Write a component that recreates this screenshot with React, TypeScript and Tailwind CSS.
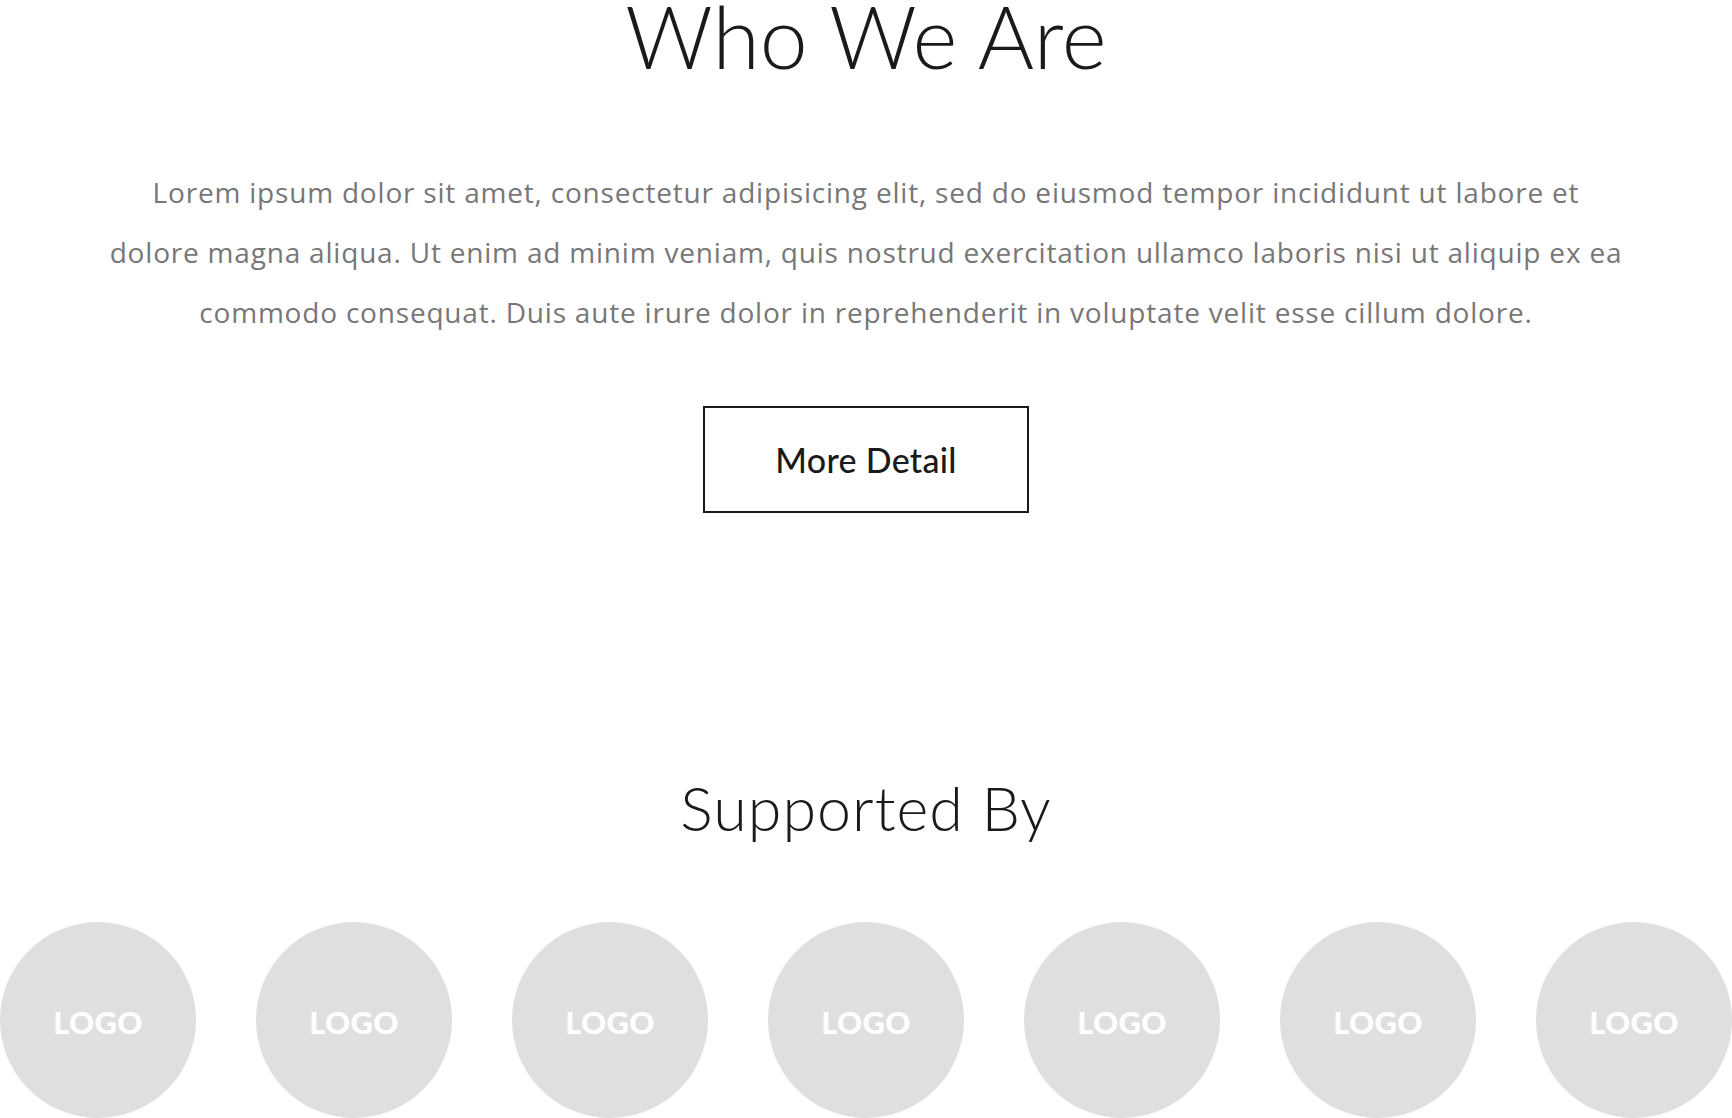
import React from "react";

const logos = [1, 2, 3, 4, 5, 6, 7];

const App: React.FC = () => {
  return (
    <div className="w-full min-h-screen bg-white overflow-hidden font-['Lato','Liberation_Sans',sans-serif]">
      <div className="flex flex-col items-center">
        {/* Who We Are */}
        <h1 className="text-[86px] leading-[72px] font-light text-[#1a1a1a]">
          Who We Are
        </h1>

        <p className="mt-[90px] text-center text-[28px] leading-[60px] tracking-[0.8px] text-[#777777] whitespace-nowrap font-['Open_Sans','Lato',sans-serif]">
          Lorem ipsum dolor sit amet, consectetur adipisicing elit, sed do eiusmod tempor incididunt ut labore et
          <br />
          dolore magna aliqua. Ut enim ad minim veniam, quis nostrud exercitation ullamco laboris nisi ut aliquip ex ea
          <br />
          commodo consequat. Duis aute irure dolor in reprehenderit in voluptate velit esse cillum dolore.
        </p>

        <button className="mt-16 w-[326px] h-[107px] border-2 border-[#1a1a1a] text-[34px] font-medium tracking-[0.3px] text-[#1a1a1a]">
          More Detail
        </button>

        {/* Supported By */}
        <h2 className="mt-[266px] text-[61px] leading-[58px] font-light tracking-[1px] text-[#1a1a1a]">
          Supported By
        </h2>

        <div className="mt-[85px] w-full flex justify-between">
          {logos.map((n) => (
            <div
              key={n}
              className="w-[196px] h-[196px] rounded-full bg-[#dfdfdf] flex items-center justify-center shrink-0"
            >
              <span className="pt-1 text-[31px] font-black tracking-[0.3px] text-white">LOGO</span>
            </div>
          ))}
        </div>
      </div>
    </div>
  );
};

export default App;
